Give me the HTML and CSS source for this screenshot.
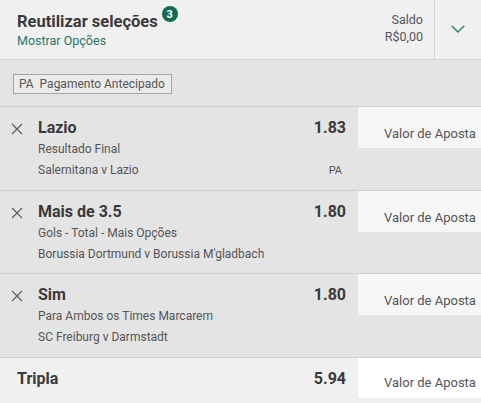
FILE: index.html
```html
<!DOCTYPE html>
<html lang="pt-BR">
<head>
<meta charset="utf-8">
<title>Boletim de Apostas</title>
<link rel="stylesheet" href="styles.css">
</head>
<body>
<div class="slip">
  <header class="head">
    <div class="head-main">
      <div class="title-row">
        <h1 class="title">Reutilizar seleções</h1>
        <span class="badge">3</span>
      </div>
      <div class="options">Mostrar Opções</div>
    </div>
    <div class="balance">
      <span>Saldo</span>
      <span>R$0,00</span>
    </div>
    <div class="toggle">
      <svg width="14" height="8" viewBox="0 0 14 8"><polyline points="0.7,0.7 7,7 13.3,0.7" fill="none" stroke="#2f7d6c" stroke-width="1.3"/></svg>
    </div>
  </header>

  <div class="promo">
    <span class="pill"><span class="pill-code">PA</span><span>Pagamento Antecipado</span></span>
  </div>

  <ul class="bets">
    <li class="bet">
      <div class="remove"><svg width="12" height="12" viewBox="0 0 12 12"><path d="M1 1L11 11M11 1L1 11" stroke="#5a5a5a" stroke-width="1.1" fill="none"/></svg></div>
      <div class="info">
        <div class="sel">Lazio</div>
        <div class="line">Resultado Final</div>
        <div class="line">Salernitana v Lazio</div>
      </div>
      <div class="price">
        <div class="odds">1.83</div>
        <div class="spacer"></div>
        <div class="pa">PA</div>
      </div>
      <div class="stake">Valor de Aposta</div>
    </li>
    <li class="bet">
      <div class="remove"><svg width="12" height="12" viewBox="0 0 12 12"><path d="M1 1L11 11M11 1L1 11" stroke="#5a5a5a" stroke-width="1.1" fill="none"/></svg></div>
      <div class="info">
        <div class="sel">Mais de 3.5</div>
        <div class="line">Gols - Total - Mais Opções</div>
        <div class="line">Borussia Dortmund v Borussia M'gladbach</div>
      </div>
      <div class="price">
        <div class="odds">1.80</div>
      </div>
      <div class="stake">Valor de Aposta</div>
    </li>
    <li class="bet">
      <div class="remove"><svg width="12" height="12" viewBox="0 0 12 12"><path d="M1 1L11 11M11 1L1 11" stroke="#5a5a5a" stroke-width="1.1" fill="none"/></svg></div>
      <div class="info">
        <div class="sel">Sim</div>
        <div class="line">Para Ambos os Times Marcarem</div>
        <div class="line">SC Freiburg v Darmstadt</div>
      </div>
      <div class="price">
        <div class="odds">1.80</div>
      </div>
      <div class="stake">Valor de Aposta</div>
    </li>
  </ul>

  <div class="total">
    <div class="total-name">Tripla</div>
    <div class="price"><div class="odds">5.94</div></div>
    <div class="stake stake-white">Valor de Aposta</div>
  </div>
</div>
</body>
</html>
```
FILE: styles.css
```css
* { box-sizing: border-box; margin: 0; padding: 0; }

body {
  margin: 0;
  font-family: Roboto, "Open Sans", sans-serif;
  color: #3b3b3b;
  background: #e4e4e4;
}

.slip { width: 481px; height: 403px; overflow: hidden; }

/* Header */
.head {
  display: flex;
  height: 60px;
  background: #f0f0f0;
  border-bottom: 1px solid #d3d3d3;
}
.head-main { flex: 1; padding: 12px 0 0 17px; }
.title-row { display: flex; align-items: flex-start; }
.title { font-size: 16.5px; font-weight: 700; line-height: 20px; color: #3a3a3a; }
.badge {
  width: 16px; height: 16px;
  margin: -6px 0 0 4px;
  border-radius: 50%;
  background: #136b50;
  color: #fff;
  font-size: 11px; font-weight: 700;
  display: flex; align-items: center; justify-content: center;
}
.options { margin-top: 1px; font-size: 12.5px; line-height: 16px; color: #2a7667; }

.balance {
  display: flex; flex-direction: column; align-items: flex-end;
  padding: 11px 11px 0 0;
  font-size: 12.5px; line-height: 17px; color: #555;
}
.toggle {
  width: 47px;
  border-left: 1px solid #d6d6d6;
  display: flex; align-items: center; justify-content: center;
  padding-bottom: 2px;
}

/* Promo band */
.promo {
  height: 47px;
  padding: 13px 0 0 13px;
  border-bottom: 1px solid #d0d0d0;
}
.pill {
  display: inline-flex; align-items: center; gap: 6px;
  height: 20px;
  padding: 0 6px 0 5px;
  border: 1px solid #a5a5a5;
  background: #ebebeb;
  font-size: 12px; line-height: 16px; color: #555;
}

/* Bets */
.bets { list-style: none; }
.bet {
  display: grid;
  grid-template-columns: 38px 1fr auto 123px;
  align-items: start;
  height: 83.667px;
  border-bottom: 1px solid #d0d0d0;
  background: #e4e4e4;
}
.remove { display: flex; padding: 16px 0 0 11px; }
.info { padding-top: 10px; }
.sel { font-size: 16px; font-weight: 700; line-height: 22px; color: #3a3a3a; }
.line { font-size: 12px; line-height: 21px; color: #555; white-space: nowrap; }

.price { padding: 10px 12px 0 0; display: flex; flex-direction: column; align-items: flex-end; }
.odds { font-size: 16px; font-weight: 700; line-height: 22px; color: #3a3a3a; }
.spacer { height: 21px; }
.pa { font-size: 11px; line-height: 21px; color: #555; padding-right: 4px; }

.stake {
  height: 41px;
  padding: 19px 0 0 26px;
  background: #f6f6f6;
  font-size: 13px; line-height: 16px; color: #555;
  white-space: nowrap;
}

/* Total */
.total {
  display: grid;
  grid-template-columns: 1fr auto 123px;
  align-items: start;
  height: 46px;
  background: #f0f0f0;
}
.total-name { padding: 10px 0 0 17px; font-size: 16px; font-weight: 700; line-height: 22px; color: #3a3a3a; }
.stake-white { height: 40px; padding-top: 17px; background: #fff; }
```
